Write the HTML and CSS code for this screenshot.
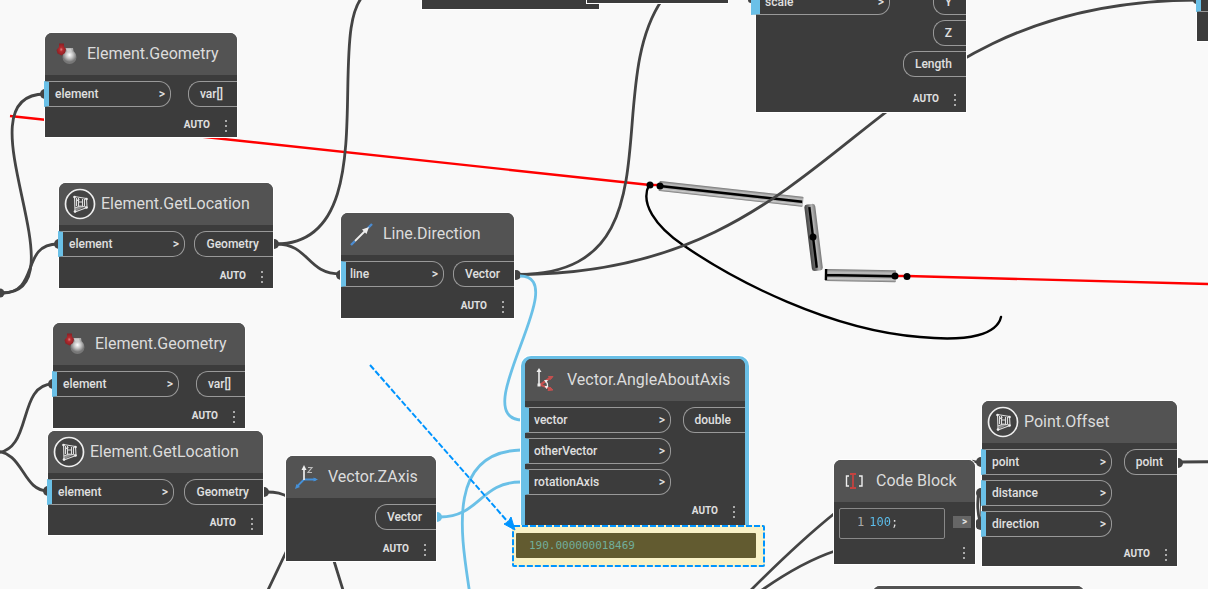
FILE: index.html
```html
<!DOCTYPE html>
<html lang="en">
<head>
<meta charset="utf-8">
<title>Node graph</title>
<link rel="stylesheet" href="styles.css">
</head>
<body>
<main class="canvas">
  <svg class="layer" aria-hidden="true">
    <defs>
      <linearGradient id="tubeH" x1="0" y1="0" x2="0" y2="1">
        <stop offset="0" stop-color="#777"/><stop offset=".25" stop-color="#bbb"/><stop offset=".6" stop-color="#999"/><stop offset=".8" stop-color="#ccc"/><stop offset="1" stop-color="#777"/>
      </linearGradient>
      <linearGradient id="tubeV" x1="0" y1="0" x2="1" y2="0">
        <stop offset="0" stop-color="#444"/><stop offset=".4" stop-color="#777"/><stop offset=".65" stop-color="#b4b4b4"/><stop offset="1" stop-color="#777"/>
      </linearGradient>
      <radialGradient id="redBall" cx=".5" cy=".5"><stop offset="0" stop-color="#e08080"/><stop offset=".35" stop-color="#b42c30"/><stop offset="1" stop-color="#8a2024"/></radialGradient>
      <radialGradient id="greyBall" cx=".5" cy=".35"><stop offset="0" stop-color="#fff"/><stop offset=".5" stop-color="#c4c4c4"/><stop offset="1" stop-color="#777"/></radialGradient>
      <symbol id="ic-solid" viewBox="0 0 24 24">
        <path d="M12 6h8l1 6-7 3z" fill="#aaa"/>
        <circle cx="16.500" cy="15" r="7" fill="url(#greyBall)"/>
        <path d="M13 6.500h5l1 3-4 1z" fill="#ccc"/>
        <path d="M6 1.500h5l0 3 2 2.500-1 4-3.500 2.500-4-2-1-3.500 2.500-3z" fill="url(#redBall)"/>
      </symbol>
      <symbol id="ic-revit" viewBox="0 0 32 32">
        <circle cx="16" cy="16" r="14.5" fill="#434343" stroke="#eee" stroke-width="1.7"/>
        <g fill="none" stroke="#ddd" stroke-width="1.1" stroke-linejoin="round"><path d="M10.500 8.500l12 2 .5 9-12 4.500z"/><path d="M14.500 10v8M18.500 11v7M12.500 12.500l3-1M14.500 14h4M11 20l5-2 6 1M20.500 11v7M12.500 10v8"/></g>
        <path d="M11 21l5-3 4 1-8 4z" fill="#ddd" opacity=".5"/>
        <g fill="#eee"><circle cx="10.500" cy="9" r="1.300"/><circle cx="22.500" cy="11" r="1.300"/><circle cx="22.500" cy="19.500" r="1.300"/><circle cx="11" cy="23.500" r="1.300"/></g>
      </symbol>
      <symbol id="ic-direction" viewBox="0 0 24 24">
        <path d="M2 23L6 19M19 6l4-4" stroke="#4b8bd0" stroke-width="2.400"/>
        <path d="M6 19L17 8" stroke="#eee" stroke-width="1.800"/><path d="M20 5l-2.500 7-4.500-4.500z" fill="#eee"/>
      </symbol>
      <symbol id="ic-angle" viewBox="0 0 24 24">
        <path d="M7 17L17 10M8 17l10 4" stroke="#c4504f" stroke-width="2.200"/><path d="M20 8.500l-2.500 3-2-3zM20 22l-5 .5 2-3.500z" fill="#c4504f" stroke="#c4504f"/>
        <path d="M6 18V3" stroke="#eee" stroke-width="1.600"/><path d="M6 0l-2.500 4h5zM4.500 15.500h3v3h-3z" fill="#eee"/>
        <path d="M12.500 13q3 3 1.500 6" fill="none" stroke="#eee" stroke-width="1.300"/><path d="M11 12l4 0-2 3zM15.500 18l-2 3-2-3z" fill="#eee"/>
      </symbol>
      <symbol id="ic-zaxis" viewBox="0 0 24 24">
        <path d="M10 14.500h12M10 14.500l-7 7" stroke="#4590d8" stroke-width="1.800"/><path d="M24 14.500l-4.500-2v4zM1 24l1.500-5 3.500 3z" fill="#4590d8"/>
        <path d="M10 15V4" stroke="#eee" stroke-width="1.700"/><path d="M10 0l-2.500 5h5z" fill="#eee"/>
        <path d="M14 2.500h4l-4 5h4" fill="none" stroke="#bbb" stroke-width="1.200"/>
      </symbol>
      <symbol id="ic-code" viewBox="0 0 24 24">
        <path d="M7 7H4.500v10H7M17 7h3v10h-3" fill="none" stroke="#eee" stroke-width="1.400"/>
        <path d="M8 5h6M8 19h6M11 5v14" stroke="#c44340" stroke-width="1.800"/>
      </symbol>
    </defs>

    <g class="scene">
      <path class="ray" d="M10 116L650 185M907 276L2000 305"/>
      <path class="ray" d="M650 185h10"/>
      <path class="ray" d="M895 276h12"/>
      <g transform="translate(660 186) rotate(6.300)"><rect x="-1" y="-5" width="145" height="10" rx="1" fill="url(#tubeH)"/><path class="axis" d="M0 0H143"/></g>
      <g transform="translate(813 237) rotate(-7)"><rect x="-5" y="-33" width="11" height="67" rx="3" fill="url(#tubeV)"/><path class="axis" d="M0 -30V31"/></g>
      <g transform="translate(825 275) rotate(1)"><rect x="0" y="-6" width="71" height="12" rx="1" fill="url(#tubeH)"/><path class="axis" d="M1 -6V5M0 0H70"/></g>
      <path class="arc" d="M649 185C640 203 655 226 683 245C735 281 830 330 920 337C970 342 997 334 1001 317"/>
      <circle cx="650" cy="185" r="3.500"/><circle cx="660" cy="186" r="3.500"/><circle cx="813" cy="237" r="3.500"/><circle cx="895" cy="276" r="3.500"/><circle cx="907" cy="276.500" r="3.500"/>
    </g>

    <g class="wires">
      <path d="M2 293C85 293 -44 94 45 94"/>
      <path d="M2 293C40 293 20 244 58 244"/>
      <path d="M-6 453C34 453 16 384 53 384"/>
      <path d="M-6 451C24 451 22 491 48 491"/>
      <path d="M276 244C390 244 320 20 368 -8"/>
      <path d="M276 244C310 244 306 274 341 274"/>
      <path d="M518 274.500C680 274 600 90 662 0"/>
      <path d="M518 274.500C850 274 856 0 1198 0"/>
      <path d="M266 492C276 492 282 493 290 498"/>
      <path d="M288 548L268 590M334 561L343 590"/>
      <path d="M751 590Q800 541 835 513M762 590Q802 562 835 551"/>
      <path d="M972 461L981 463M979 490Q976 507 980 522M981 495L982 520"/>
      <path d="M1181 462L2000 455"/>
    </g>
    <g class="dots">
      <circle cx="0" cy="293" r="4.500"/><circle cx="45" cy="94" r="5"/><circle cx="59" cy="244" r="5"/><circle cx="53" cy="384" r="5"/><circle cx="48" cy="491" r="5"/>
      <circle cx="274" cy="244" r="5"/><circle cx="341" cy="275" r="5"/><circle cx="516" cy="275" r="5"/><circle cx="264" cy="492" r="5"/><circle cx="981" cy="462" r="5"/><circle cx="981" cy="493" r="5"/><circle cx="981" cy="524" r="6"/><circle cx="1178" cy="463" r="5"/><circle cx="1197" cy="0" r="4"/><circle cx="751" cy="0" r="3"/>
    </g>
    <g class="wires wires-active">
      <path d="M520 276C575 276 463 420 523 420"/>
      <path d="M521 450C444 452 462 540 470 595"/>
      <path d="M440 517C480 517 480 482 521 482"/>
    </g>
    <circle class="dot-active" cx="437" cy="517" r="5"/>
  </svg>

  <section class="node node-top-a"><footer class="foot"><span>AUTO</span></footer></section>
  <section class="node node-top-b"></section>

  <section class="node node-scale">
    <div class="ports">
      <div class="inputs"><div class="in"><span>scale</span><button class="level">&gt;</button></div></div>
      <div class="outputs"><div class="out">Y</div><div class="out">Z</div><div class="out">Length</div></div>
    </div>
    <footer class="foot"><span>AUTO</span><button class="menu" aria-label="Node menu"><i></i><i></i><i></i></button></footer>
  </section>
  <section class="node node-edge"><div class="in"></div></section>
  <section class="node node-bottom"><header class="head"></header></section>

  <section class="node node-geo-1">
    <header class="head"><svg class="icon"><use href="#ic-solid"/></svg><h2>Element.Geometry</h2></header>
    <div class="ports">
      <div class="inputs"><div class="in"><span>element</span><button class="level">&gt;</button></div></div>
      <div class="outputs"><div class="out">var[]</div></div>
    </div>
    <footer class="foot"><span>AUTO</span><button class="menu" aria-label="Node menu"><i></i><i></i><i></i></button></footer>
  </section>

  <section class="node node-loc-1">
    <header class="head"><svg class="icon icon-round"><use href="#ic-revit"/></svg><h2>Element.GetLocation</h2></header>
    <div class="ports">
      <div class="inputs"><div class="in"><span>element</span><button class="level">&gt;</button></div></div>
      <div class="outputs"><div class="out">Geometry</div></div>
    </div>
    <footer class="foot"><span>AUTO</span><button class="menu" aria-label="Node menu"><i></i><i></i><i></i></button></footer>
  </section>

  <section class="node node-geo-2">
    <header class="head"><svg class="icon"><use href="#ic-solid"/></svg><h2>Element.Geometry</h2></header>
    <div class="ports">
      <div class="inputs"><div class="in"><span>element</span><button class="level">&gt;</button></div></div>
      <div class="outputs"><div class="out">var[]</div></div>
    </div>
    <footer class="foot"><span>AUTO</span><button class="menu" aria-label="Node menu"><i></i><i></i><i></i></button></footer>
  </section>

  <section class="node node-loc-2">
    <header class="head"><svg class="icon icon-round"><use href="#ic-revit"/></svg><h2>Element.GetLocation</h2></header>
    <div class="ports">
      <div class="inputs"><div class="in"><span>element</span><button class="level">&gt;</button></div></div>
      <div class="outputs"><div class="out">Geometry</div></div>
    </div>
    <footer class="foot"><span>AUTO</span><button class="menu" aria-label="Node menu"><i></i><i></i><i></i></button></footer>
  </section>

  <section class="node node-line">
    <header class="head"><svg class="icon"><use href="#ic-direction"/></svg><h2>Line.Direction</h2></header>
    <div class="ports">
      <div class="inputs"><div class="in"><span>line</span><button class="level">&gt;</button></div></div>
      <div class="outputs"><div class="out">Vector</div></div>
    </div>
    <footer class="foot"><span>AUTO</span><button class="menu" aria-label="Node menu"><i></i><i></i><i></i></button></footer>
  </section>

  <section class="node node-zaxis">
    <header class="head"><svg class="icon"><use href="#ic-zaxis"/></svg><h2>Vector.ZAxis</h2></header>
    <div class="ports">
      <div class="inputs"></div>
      <div class="outputs"><div class="out">Vector</div></div>
    </div>
    <footer class="foot"><span>AUTO</span><button class="menu" aria-label="Node menu"><i></i><i></i><i></i></button></footer>
  </section>

  <section class="node node-angle">
    <header class="head"><svg class="icon"><use href="#ic-angle"/></svg><h2>Vector.AngleAboutAxis</h2></header>
    <div class="ports">
      <div class="inputs">
        <div class="in"><span>vector</span><button class="level">&gt;</button></div>
        <div class="in"><span>otherVector</span><button class="level">&gt;</button></div>
        <div class="in"><span>rotationAxis</span><button class="level">&gt;</button></div>
      </div>
      <div class="outputs"><div class="out">double</div></div>
    </div>
    <footer class="foot"><span>AUTO</span><button class="menu" aria-label="Node menu"><i></i><i></i><i></i></button></footer>
  </section>

  <section class="node node-code">
    <header class="head"><svg class="icon"><use href="#ic-code"/></svg><h2>Code Block</h2></header>
    <div class="code-row">
      <div class="editor"><label for="code">1</label><input id="code" class="code" type="text" value="100;"></div>
      <button class="code-out">&gt;</button>
    </div>
    <footer class="foot"><button class="menu" aria-label="Node menu"><i></i><i></i><i></i></button></footer>
  </section>

  <section class="node node-offset">
    <header class="head"><svg class="icon icon-round"><use href="#ic-revit"/></svg><h2>Point.Offset</h2></header>
    <div class="ports">
      <div class="inputs">
        <div class="in"><span>point</span><button class="level">&gt;</button></div>
        <div class="in"><span>distance</span><button class="level">&gt;</button></div>
        <div class="in"><span>direction</span><button class="level">&gt;</button></div>
      </div>
      <div class="outputs"><div class="out">point</div></div>
    </div>
    <footer class="foot"><span>AUTO</span><button class="menu" aria-label="Node menu"><i></i><i></i><i></i></button></footer>
  </section>

  <div class="callout">
    <svg class="callout-frame" aria-hidden="true"><rect class="dash" x="1" y="1" width="251" height="40" rx="1"/></svg>
    <output class="value">190.000000018469</output>
  </div>
  <svg class="layer pointer" aria-hidden="true">
    <path class="dash" d="M370 365L508 522"/><path d="M515 530L504 524L508 522L511 517Z" fill="#0094ff" stroke="#0094ff"/>
  </svg>
</main>
</body>
</html>
```

FILE: styles.css
```css
* { box-sizing: border-box; }

body {
  margin: 0;
  font-family: Roboto, "Noto Sans", sans-serif;
  font-size: 12px;
  color: #e0e0e0;
}

.canvas {
  position: relative;
  height: 100vh;
  overflow: hidden;
  background: #f9f9f9;
}

.layer {
  position: absolute;
  inset: 0;
  width: 100%;
  height: 100%;
}

.pointer { pointer-events: none; }

.ray { fill: none; stroke: #f00; stroke-width: 2.4; }
.axis { fill: none; stroke: #000; stroke-width: 2.4; }
.arc { fill: none; stroke: #000; stroke-width: 2.4; stroke-linecap: round; }
.wires { fill: none; stroke: #444; stroke-width: 2.8; }
.wires-active { stroke: #6ac0e7; }
.dots { fill: #444; }
.dot-active { fill: #6ac0e7; }
.dash { fill: none; stroke: #0094ff; stroke-width: 2; stroke-dasharray: 6 2; }

button {
  border: 0;
  padding: 0;
  background: none;
  color: inherit;
  font: inherit;
}

.node {
  position: absolute;
  display: flex;
  flex-direction: column;
  background: #3c3c3c;
  border-radius: 7px 7px 0 0;
  box-shadow: 0 0 0 1px #fff;
}

.head {
  display: flex;
  align-items: center;
  gap: 10px;
  height: 42px;
  padding-left: 8px;
  border-radius: 7px 7px 0 0;
  background: #535353;
}

.head h2 {
  margin: 0;
  font-size: 16px;
  font-weight: 400;
  line-height: 20px;
  color: #dcdcdc;
  white-space: nowrap;
}

.icon {
  flex: none;
  width: 24px;
  height: 24px;
}

.icon-round {
  width: 32px;
  height: 32px;
}

.head:has(.icon-round) { padding-left: 5px; gap: 5px; }

.ports {
  display: flex;
  justify-content: space-between;
  padding-top: 6px;
}

.inputs, .outputs {
  display: flex;
  flex-direction: column;
  gap: 5px;
}

.outputs { align-items: flex-end; }

.in, .out {
  display: flex;
  align-items: center;
  height: 26px;
  border: 1px solid #999;
  font-weight: 500;
  line-height: 16px;
}

.in {
  justify-content: space-between;
  width: 127px;
  margin-left: -1px;
  padding: 0 5px 0 6px;
  border-left: 5px solid #6ac0e7;
  border-radius: 0 12px 12px 0;
}

.out {
  padding: 0 14px 0 11px;
  border-right: 0;
  border-radius: 12px 0 0 12px;
}

.foot {
  display: flex;
  flex: 1;
  align-items: flex-end;
  justify-content: flex-end;
  gap: 15px;
  padding: 0 10px 5px 0;
  font-size: 10px;
  font-weight: 700;
  line-height: 14px;
}

.menu {
  display: flex;
  flex-direction: column;
  gap: 3px;
}

.menu i {
  width: 2px;
  height: 2px;
  background: #aaa;
}

.node-geo-1 { left: 45px; top: 33px; width: 192px; min-height: 104px; }
.node-loc-1 { left: 59px; top: 183px; width: 214px; min-height: 105px; }
.node-geo-2 { left: 53px; top: 323px; width: 192px; min-height: 105px; }
.node-loc-2 { left: 48px; top: 431px; width: 215px; min-height: 104px; }
.node-line { left: 341px; top: 213px; width: 173px; min-height: 105px; }
.node-zaxis { left: 286px; top: 456px; width: 150px; min-height: 105px; }
.node-code { left: 834px; top: 460px; width: 141px; min-height: 104px; }
.node-offset { left: 982px; top: 401px; width: 195px; min-height: 165px; }
.node-scale { left: 756px; top: -17px; width: 210px; min-height: 129px; border-radius: 0; }
.node-edge { left: 1197px; top: -14px; width: 192px; height: 55px; }
.node-bottom { left: 873px; top: 586px; width: 211px; height: 105px; }
.node-top-a { left: 422px; top: -95px; width: 177px; height: 104px; }
.node-top-b { left: 587px; top: -101px; width: 141px; height: 104px; }

.node-line .in { width: 103px; margin-left: 0; padding-left: 4px; }
.node-scale .in { width: 139px; margin-left: -5px; padding-left: 5px; border-left-width: 9px; }
.node-offset .in { width: 131px; }
.node-scale .foot { padding-bottom: 6px; }
.node-top-a .foot { padding-right: 28px; }

.node-angle {
  left: 521px;
  top: 356px;
  width: 228px;
  min-height: 170px;
  border: 4px solid #6ac0e7;
  border-top-width: 3px;
  border-bottom: 0;
  border-radius: 10px 10px 0 0;
}

.node-angle .in {
  width: 146px;
  margin-left: 0;
  padding-left: 5px;
  border-left-width: 4px;
}

.node-angle .foot { padding-bottom: 8px; }

.code-row {
  display: flex;
  align-items: flex-start;
  justify-content: space-between;
  padding: 6px 4px 0 5px;
}

.editor {
  display: flex;
  align-items: flex-start;
  gap: 5px;
  width: 106px;
  height: 31px;
  padding: 5px 4px 0 17px;
  border: 1px solid #888;
  border-radius: 2px;
  font-family: "DejaVu Sans Mono", monospace;
  line-height: 16px;
  color: #aaa;
}

.code {
  width: 60px;
  height: 16px;
  padding: 0;
  border: 0;
  outline: 0;
  font: inherit;
  color: transparent;
  background: linear-gradient(90deg, #5cc0ee 21px, #ddd 21px);
  -webkit-background-clip: text;
  background-clip: text;
}

.code-out {
  width: 18px;
  height: 12px;
  margin-top: 8px;
  padding-left: 5px;
  background: #666;
  font-size: 10px;
  font-weight: 700;
  line-height: 12px;
}

.callout {
  position: absolute;
  left: 512px;
  top: 525px;
  width: 253px;
  height: 42px;
  padding: 8px 9px 9px 4px;
  background: #f9f2c8;
}

.callout-frame {
  position: absolute;
  inset: 0;
  width: 100%;
  height: 100%;
}

.value {
  display: block;
  padding-left: 13px;
  border-radius: 1px;
  background: #625b30;
  font-family: "DejaVu Sans Mono", monospace;
  font-size: 11px;
  line-height: 25px;
  color: #71ae9b;
}
```
